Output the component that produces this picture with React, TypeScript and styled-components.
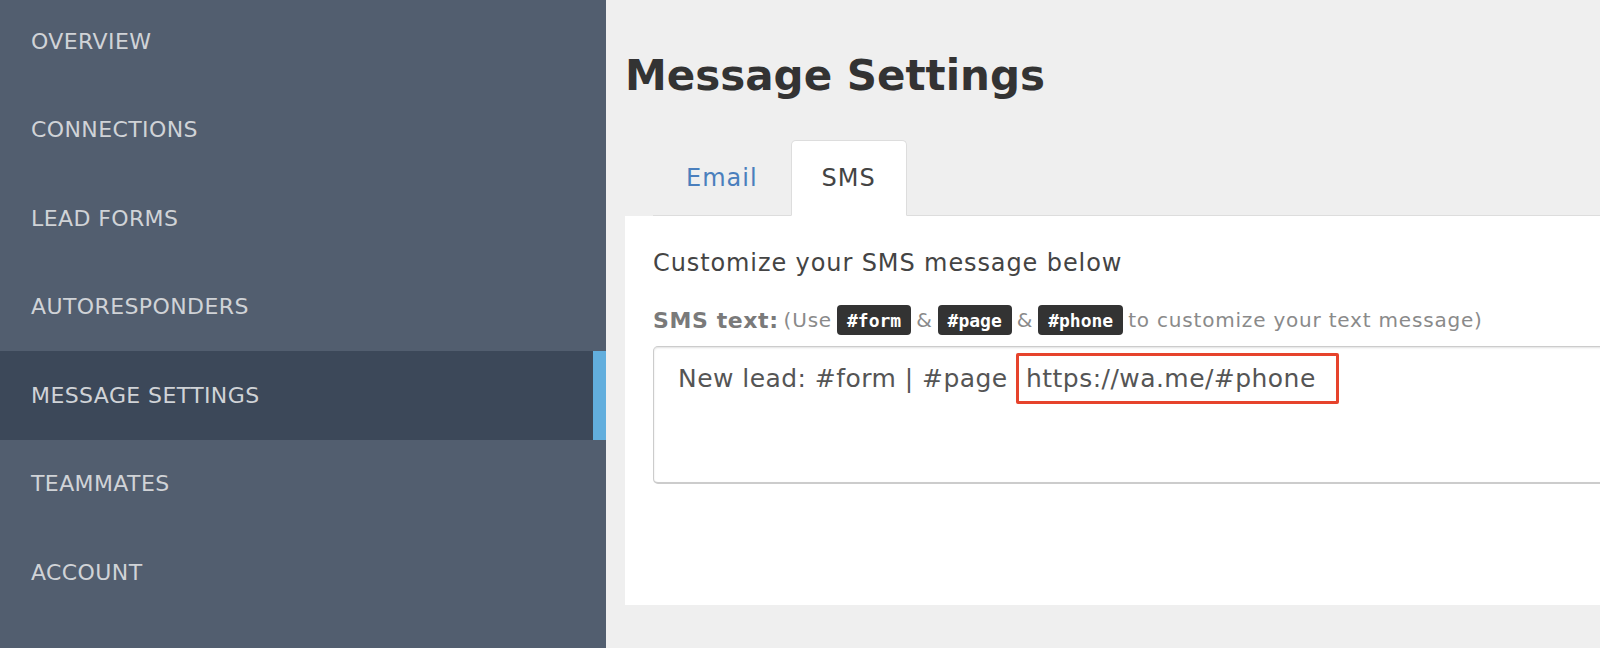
import React from 'react';
import styled, { createGlobalStyle } from 'styled-components';

const GlobalStyle = createGlobalStyle`
  html, body {
    margin: 0;
    padding: 0;
    background: #efefef;
    overflow: hidden;
  }
  body {
    font-family: "DejaVu Sans", "Open Sans", sans-serif;
  }
`;

const Layout = styled.div`
  display: flex;
  height: 648px;
  overflow: hidden;
`;

const Sidebar = styled.nav`
  width: 606px;
  flex-shrink: 0;
  background: #525e6f;
  display: flex;
  flex-direction: column;
  margin-top: -3px;
`;

const NavItem = styled.a<{ $active?: boolean }>`
  display: flex;
  align-items: center;
  height: 88.5px;
  flex-shrink: 0;
  box-sizing: border-box;
  padding-left: 31px;
  font-size: 22px;
  letter-spacing: 0.4px;
  color: #d0d3d7;
  text-transform: uppercase;
  text-decoration: none;
  background: ${(p) => (p.$active ? '#3c4859' : 'transparent')};
  border-right: ${(p) => (p.$active ? '13px solid #62aedd' : 'none')};
`;

const Main = styled.main`
  flex: 1;
  min-width: 0;
  padding-left: 19px;
  overflow: hidden;
`;

const Title = styled.h1`
  margin: 50px 0 0;
  font-size: 42px;
  line-height: 52px;
  font-weight: 700;
  color: #333333;
`;

const TabList = styled.div`
  display: flex;
  align-items: flex-end;
  height: 75px;
  margin: 38px 0 0 28px;
  width: 1100px;
  border-bottom: 1px solid #dddddd;
`;

const Tab = styled.div<{ $active?: boolean }>`
  display: flex;
  align-items: center;
  box-sizing: border-box;
  height: ${(p) => (p.$active ? '76px' : '75px')};
  padding: 0 ${(p) => (p.$active ? '30px' : '32px')};
  margin-bottom: ${(p) => (p.$active ? '-1px' : '0')};
  font-size: 24px;
  letter-spacing: 1px;
  color: ${(p) => (p.$active ? '#444444' : '#4a7fbd')};
  background: ${(p) => (p.$active ? '#ffffff' : 'transparent')};
  border: ${(p) => (p.$active ? '1px solid #dddddd' : '1px solid transparent')};
  border-bottom-color: ${(p) => (p.$active ? '#ffffff' : 'transparent')};
  border-radius: 5px 5px 0 0;
`;

const Panel = styled.section`
  width: 1100px;
  height: 389px;
  box-sizing: border-box;
  background: #ffffff;
  padding: 33px 0 0 28px;
`;

const Intro = styled.p`
  margin: 0;
  font-size: 24px;
  letter-spacing: 0.9px;
  line-height: 28px;
  color: #444444;
`;

const LabelRow = styled.div`
  display: flex;
  align-items: center;
  gap: 5px;
  margin-top: 28px;
  height: 30px;
  font-size: 20px;
  letter-spacing: 0.8px;
  color: #8a8a8a;
  white-space: nowrap;
`;

const LabelStrong = styled.strong`
  font-size: 22px;
  letter-spacing: 0.6px;
  font-weight: 700;
  color: #7a7a7a;
`;

const Chip = styled.code`
  display: inline-flex;
  align-items: center;
  height: 30px;
  padding: 0 10px;
  border-radius: 4px;
  background: #333333;
  color: #ffffff;
  font-family: "DejaVu Sans Mono", "Liberation Mono", monospace;
  font-size: 18px;
  letter-spacing: 0;
  font-weight: 700;
`;

const TextBox = styled.div`
  margin-top: 11px;
  width: 1000px;
  height: 138px;
  box-sizing: border-box;
  padding: 16px 24px;
  border: 1px solid #cccccc;
  border-bottom-width: 2px;
  border-radius: 5px;
  box-shadow: inset 0 1px 2px rgba(0, 0, 0, 0.12);
  font-size: 25px;
  letter-spacing: 0.45px;
  line-height: 32px;
  color: #555555;
  white-space: nowrap;
`;

const Highlight = styled.span`
  padding: 8px 20px 8px 7px;
  border: 3px solid #e6432c;
  border-radius: 2px;
`;

const navItems = [
  'Overview',
  'Connections',
  'Lead Forms',
  'Autoresponders',
  'Message Settings',
  'Teammates',
  'Account',
];

const App = (): JSX.Element => {
  return (
    <>
      <GlobalStyle />
      <Layout>
        <Sidebar>
          {navItems.map((item) => (
            <NavItem key={item} $active={item === 'Message Settings'}>
              {item}
            </NavItem>
          ))}
        </Sidebar>
        <Main>
          <Title>Message Settings</Title>
          <TabList>
            <Tab>Email</Tab>
            <Tab $active>SMS</Tab>
          </TabList>
          <Panel>
            <Intro>Customize your SMS message below</Intro>
            <LabelRow>
              <LabelStrong>SMS text:</LabelStrong>
              <span>(Use</span>
              <Chip>#form</Chip>
              <span>&amp;</span>
              <Chip>#page</Chip>
              <span>&amp;</span>
              <Chip>#phone</Chip>
              <span>to customize your text message)</span>
            </LabelRow>
            <TextBox>
              New lead: #form | #page <Highlight>https://wa.me/#phone</Highlight>
            </TextBox>
          </Panel>
        </Main>
      </Layout>
    </>
  );
};

export default App;
